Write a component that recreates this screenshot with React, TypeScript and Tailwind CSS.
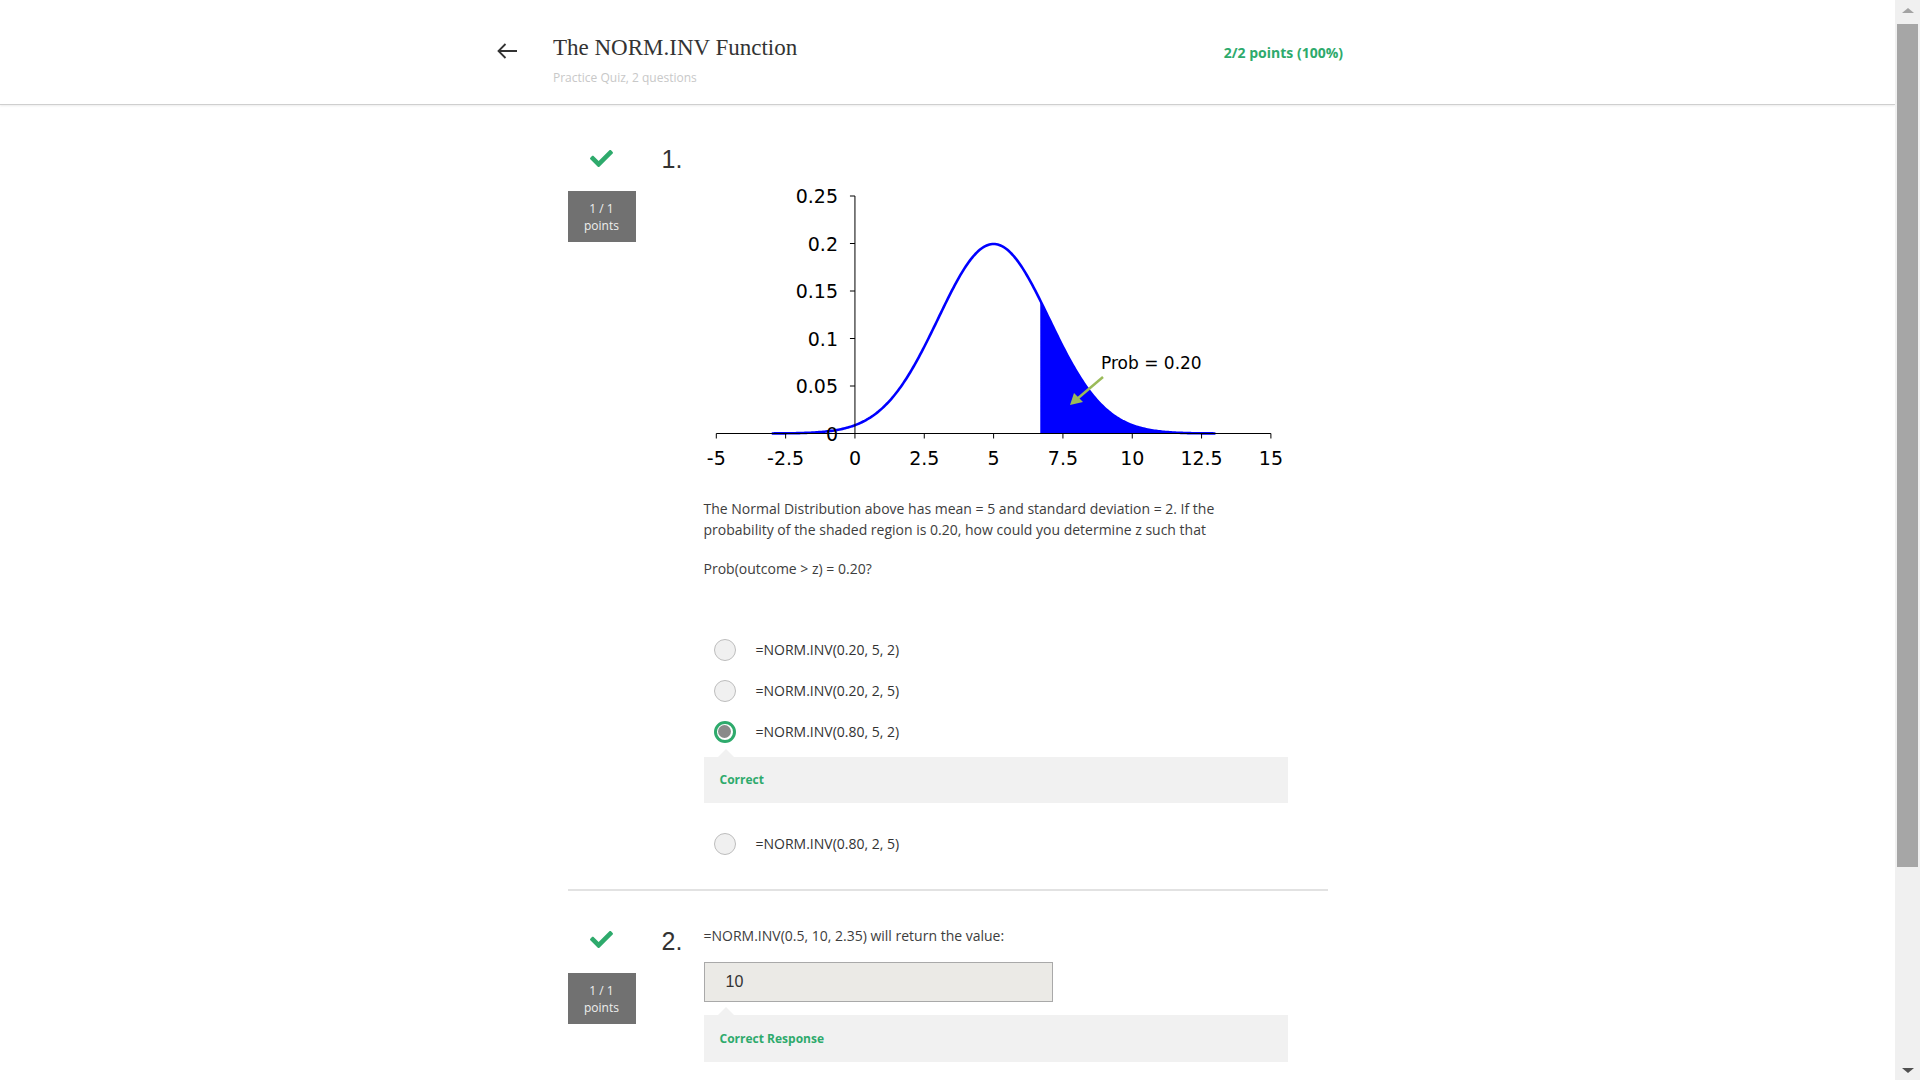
import React from "react";
import { FaCheck } from "react-icons/fa";

function X(u: number) {
  return 12.3 + (u + 5) * 27.73;
}
function Y(p: number) {
  return 293.5 - 950 * p;
}
function pdf(u: number) {
  return 0.19947 * Math.exp(-((u - 5) * (u - 5)) / 8);
}

function Chart() {
  const pts: string[] = [];
  for (let u = -3; u <= 13.0001; u += 0.05) {
    pts.push(`${X(u).toFixed(2)},${Y(pdf(u)).toFixed(2)}`);
  }
  const curve = "M" + pts.join(" L");
  const z = 6.683;
  const fillPts: string[] = [];
  for (let u = z; u <= 13.0001; u += 0.05) {
    fillPts.push(`${X(u).toFixed(2)},${Y(pdf(u)).toFixed(2)}`);
  }
  const fill =
    `M${X(z).toFixed(2)},${Y(0)} L` + fillPts.join(" L") + ` L${X(13).toFixed(2)},${Y(0)} Z`;
  const yLabels = [
    { v: 0.25, t: "0.25" },
    { v: 0.2, t: "0.2" },
    { v: 0.15, t: "0.15" },
    { v: 0.1, t: "0.1" },
    { v: 0.05, t: "0.05" },
    { v: 0, t: "0" },
  ];
  const xLabels = [
    { v: -5, t: "-5" },
    { v: -2.5, t: "-2.5" },
    { v: 0, t: "0" },
    { v: 2.5, t: "2.5" },
    { v: 5, t: "5" },
    { v: 7.5, t: "7.5" },
    { v: 10, t: "10" },
    { v: 12.5, t: "12.5" },
    { v: 15, t: "15" },
  ];
  return (
    <svg width="600" height="335" viewBox="0 0 600 335" className="block">
      <path d={fill} fill="#0000ff" />
      <path d={curve} fill="none" stroke="#0000ff" strokeWidth="2.6" />
      <line x1={X(0)} y1={Y(0.25)} x2={X(0)} y2={Y(0)} stroke="#000" strokeWidth="1" />
      <line x1={X(-5)} y1={Y(0)} x2={X(15)} y2={Y(0)} stroke="#000" strokeWidth="1" />
      {yLabels.map((l) => (
        <g key={l.t}>
          <line x1={X(0) - 5} y1={Y(l.v)} x2={X(0)} y2={Y(l.v)} stroke="#000" strokeWidth="1" />
          <text
            x={134}
            y={Y(l.v) + 7}
            textAnchor="end"
            fontFamily="'DejaVu Sans', sans-serif"
            fontSize="19"
            fill="#000"
          >
            {l.t}
          </text>
        </g>
      ))}
      {xLabels.map((l) => (
        <g key={l.t}>
          <line x1={X(l.v)} y1={Y(0)} x2={X(l.v)} y2={Y(0) + 5} stroke="#000" strokeWidth="1" />
          <text
            x={X(l.v)}
            y={Y(0) + 31}
            textAnchor="middle"
            fontFamily="'DejaVu Sans', sans-serif"
            fontSize="19"
            fill="#000"
          >
            {l.t}
          </text>
        </g>
      ))}
      <text x={397} y={229} fontFamily="'DejaVu Sans', sans-serif" fontSize="17" fill="#000">
        Prob = 0.20
      </text>
      <line x1={399} y1={237} x2={373} y2={259} stroke="#9bbb59" strokeWidth="2.5" />
      <polygon points="366,265 370,253 379,262" fill="#9bbb59" />
    </svg>
  );
}

function PointsBox() {
  return (
    <div className="w-[68px] h-[51px] bg-[#717171] flex flex-col items-center justify-center text-[12px] leading-[17px] text-[#eeeeee]">
      <span>1 / 1</span>
      <span>points</span>
    </div>
  );
}

function Radio({ selected }: { selected?: boolean }) {
  if (selected) {
    return (
      <div className="w-[22px] h-[22px] rounded-full border-[3px] border-[#2eaa6c] bg-white flex items-center justify-center">
        <div className="w-[13px] h-[13px] rounded-full bg-[#8a8a8a]" />
      </div>
    );
  }
  return <div className="w-[22px] h-[22px] rounded-full border border-[#bdbdbd] bg-[#f0f0f0]" />;
}

function Feedback({ text, className }: { text: string; className?: string }) {
  return (
    <div className={"relative w-[584px] bg-[#f1f1f1] flex items-center pl-[16px] " + (className ?? "")}>
      <div className="absolute left-[14px] -top-[8px] w-0 h-0 border-l-[8px] border-r-[8px] border-b-[8px] border-l-transparent border-r-transparent border-b-[#f1f1f1]" />
      <span className="text-[12px] font-bold text-[#2eaa6c]">{text}</span>
    </div>
  );
}

function Option({ text, selected }: { text: string; selected?: boolean }) {
  return (
    <div className="h-[41px] flex items-center pl-[10px]">
      <Radio selected={selected} />
      <span className="ml-[20px] text-[14px] text-[#333]">{text}</span>
    </div>
  );
}

export default function App() {
  return (
    <div
      className="h-[1080px] w-[1920px] overflow-hidden flex bg-white"
      style={{ fontFamily: "'Open Sans', 'Noto Sans', sans-serif" }}
    >
      <div className="w-[1895px] flex flex-col">
        {/* Header */}
        <header className="h-[105px] border-b border-[#cfcfcf] shadow-[0_1px_2px_rgba(0,0,0,0.08)] flex">
          <div className="ml-[497px] w-[846px] flex">
            <div className="pt-[43px]">
              <svg width="21" height="16" viewBox="0 0 21 16" className="block">
                <path d="M20 8H1.5M8.5 1 1.5 8l7 7" fill="none" stroke="#333" strokeWidth="1.8" />
              </svg>
            </div>
            <div className="ml-[35px] flex flex-col pt-[34px]">
              <h1
                className="text-[23px] leading-[28px] text-[#333]"
                style={{ fontFamily: "'Liberation Serif', serif" }}
              >
                The NORM.INV Function
              </h1>
              <div className="mt-[9px] text-[12px] leading-[14px] text-[#c8c8c8]">
                Practice Quiz, 2 questions
              </div>
            </div>
            <div className="ml-auto pt-[43px] text-[14px] font-bold text-[#2eaa6c] leading-[20px]">
              2/2 points (100%)
            </div>
          </div>
        </header>

        {/* Body */}
        <main className="w-[760px] mx-auto flex flex-col pt-[36px]">
          {/* Question 1 */}
          <div className="flex">
            <div className="w-[68px] flex flex-col items-center">
              <FaCheck className="mt-[6px] text-[#2eaa6c]" size={23} />
              <div className="mt-[21px]">
                <PointsBox />
              </div>
            </div>
            <div
              className="w-[68px] pl-[26px] pt-[6px] text-[25px] leading-[25px] text-[#333]"
              style={{ fontFamily: "'Liberation Sans', Arial, sans-serif" }}
            >
              1.
            </div>
            <div className="flex flex-col -mt-[1px]">
              <Chart />
              <div className="mt-[23px] text-[14px] leading-[21px] text-[#3d3d3d]">
                <p>
                  The Normal Distribution above has mean = 5 and standard deviation = 2. If the
                  <br />
                  probability of the shaded region is 0.20, how could you determine z such that
                </p>
                <p className="mt-[18px]">Prob(outcome &gt; z) = 0.20?</p>
              </div>
              <div className="mt-[50px] flex flex-col">
                <Option text="=NORM.INV(0.20, 5, 2)" />
                <Option text="=NORM.INV(0.20, 2, 5)" />
                <Option text="=NORM.INV(0.80, 5, 2)" selected />
                <Feedback text="Correct" className="mt-[5px] h-[46px]" />
                <div className="mt-[20px]">
                  <Option text="=NORM.INV(0.80, 2, 5)" />
                </div>
              </div>
            </div>
          </div>

          <div className="mt-[25px] h-[2px] bg-[#e2e2e2]" />

          {/* Question 2 */}
          <div className="flex pt-[32px]">
            <div className="w-[68px] flex flex-col items-center">
              <FaCheck className="mt-[5px] text-[#2eaa6c]" size={23} />
              <div className="mt-[22px]">
                <PointsBox />
              </div>
            </div>
            <div
              className="w-[68px] pl-[26px] pt-[6px] text-[25px] leading-[25px] text-[#333]"
              style={{ fontFamily: "'Liberation Sans', Arial, sans-serif" }}
            >
              2.
            </div>
            <div className="flex flex-col pt-[2px]">
              <div className="text-[14px] leading-[21px] text-[#3d3d3d]">
                =NORM.INV(0.5, 10, 2.35) will return the value:
              </div>
              <div
                className="mt-[16px] w-[349px] h-[40px] bg-[#ebeae6] border border-[#a9a9a9] flex items-center pl-[21px] text-[16px] text-[#333]"
                style={{ fontFamily: "'Liberation Sans', Arial, sans-serif" }}
              >
                10
              </div>
              <Feedback text="Correct Response" className="mt-[13px] h-[47px]" />
            </div>
          </div>
        </main>
      </div>

      {/* Scrollbar */}
      <div className="w-[25px] h-full bg-[#f0f0f0] flex flex-col items-center">
        <div className="h-[20px] flex items-center justify-center">
          <div className="w-0 h-0 border-l-[6px] border-r-[6px] border-b-[5px] border-l-transparent border-r-transparent border-b-[#a3a3a3]" />
        </div>
        <div className="mt-[4px] w-[21px] h-[843px] bg-[#a6a6a6]" />
        <div className="mt-auto h-[20px] flex items-center justify-center">
          <div className="w-0 h-0 border-l-[6px] border-r-[6px] border-t-[5px] border-l-transparent border-r-transparent border-t-[#505050]" />
        </div>
      </div>
    </div>
  );
}
